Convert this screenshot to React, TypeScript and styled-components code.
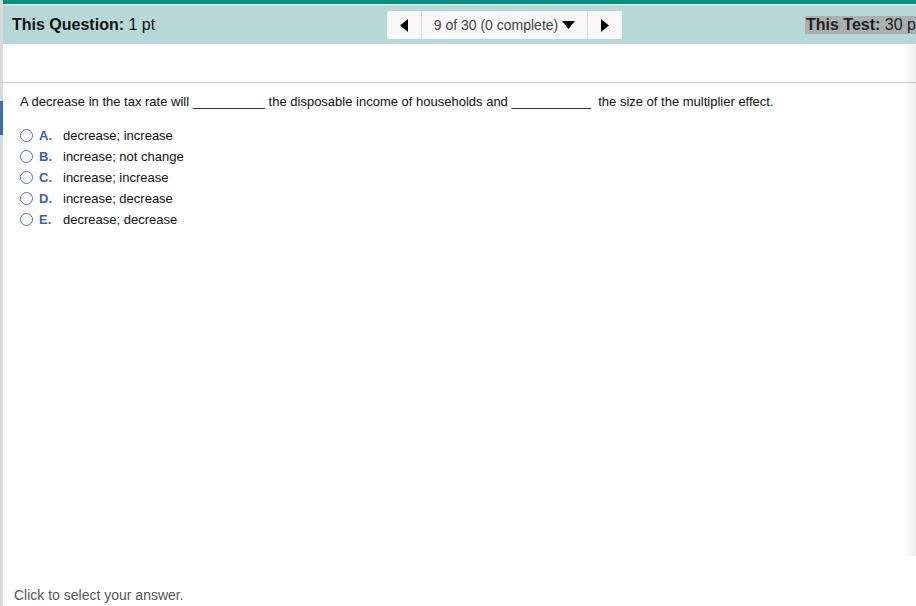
import React from "react";
import styled, { createGlobalStyle } from "styled-components";

const Global = createGlobalStyle`
  html, body { margin: 0; padding: 0; height: 100%; background: #fff; overflow: hidden; }
  body { font-family: Arial, "Liberation Sans", sans-serif; }
  #root { height: 100%; }
`;

const Page = styled.div`
  display: flex;
  width: 916px;
  height: 606px;
  overflow: hidden;
`;

const SideStrip = styled.div`
  position: relative;
  width: 3px;
  flex: none;
  background: #d9d9d9;
`;

const SideMarker = styled.div`
  position: absolute;
  left: 0;
  top: 101px;
  width: 3px;
  height: 34px;
  background: #3b6db4;
`;

const Main = styled.div`
  position: relative;
  flex: 1;
  display: flex;
  flex-direction: column;
  min-width: 0;
`;

const TopBar = styled.div`
  height: 4px;
  background: #00907f;
  border-bottom: 1px solid #fff;
`;

const Header = styled.div`
  height: 39px;
  background: #b6d9d7;
  display: flex;
  align-items: center;
  padding-left: 9px;
  position: relative;
  overflow: hidden;
`;

const Label = styled.span`
  font-size: 16px;
  color: #111;
  white-space: nowrap;
`;

const Bold = styled.b`
  font-weight: bold;
`;

const Nav = styled.div`
  position: absolute;
  left: 384px;
  top: 6px;
  display: flex;
  height: 28px;
  background: #f8f8f8;
  border-radius: 2px;
`;

const NavButton = styled.div`
  width: 34px;
  display: flex;
  align-items: center;
  justify-content: center;
`;

const NavMid = styled.div`
  width: 165px;
  display: flex;
  align-items: center;
  justify-content: center;
  gap: 4px;
  border-left: 1px solid #dcdcdc;
  border-right: 1px solid #dcdcdc;
  font-size: 14px;
  color: #444;
`;

const TestLabel = styled.span`
  position: absolute;
  left: 802px;
  top: 11px;
  background: #a9b0b0;
  font-size: 16px;
  color: #222;
  padding: 0 2px 0 1px;
  line-height: 18px;
  white-space: nowrap;
`;

const Spacer = styled.div`
  height: 38px;
  border-bottom: 1px solid #cfcfcf;
`;

const Content = styled.div`
  flex: 1;
  padding: 11px 0 0 17px;
  font-size: 13px;
  color: #111;
  display: flex;
  flex-direction: column;
`;

const Question = styled.div`
  line-height: 16px;
  white-space: nowrap;
`;

const Options = styled.div`
  margin-top: 17px;
  display: flex;
  flex-direction: column;
  gap: 5px;
`;

const Option = styled.div`
  display: flex;
  align-items: center;
  height: 16px;
  font-size: 13px;
`;

const Radio = styled.span`
  border: 1.3px solid #4a6fcc;
  border-radius: 50%;
  box-sizing: border-box;
  flex: none;
  width: 13px;
  height: 13px;
`;

const Letter = styled.span`
  color: #3a5fb8;
  font-weight: 600;
  margin-left: 6px;
  width: 24px;
`;

const Footer = styled.div`
  margin-top: auto;
  padding: 0 0 2px 11px;
  font-size: 14px;
  color: #555;
  line-height: 18px;
`;

const Shadow = styled.div`
  position: absolute;
  right: 0;
  top: 44px;
  bottom: 50px;
  width: 12px;
  background: linear-gradient(to right, rgba(0,0,0,0), rgba(0,0,0,0.07));
  pointer-events: none;
`;

const Tri = ({ dir }: { dir: "left" | "right" | "down" }) => {
  if (dir === "down")
    return (
      <svg width="13" height="10" viewBox="0 0 13 10">
        <polygon points="0,1 13,1 6.5,9" fill="#000" />
      </svg>
    );
  return (
    <svg width="10" height="13" viewBox="0 0 10 13">
      {dir === "left" ? (
        <polygon points="9,0 9,13 1,6.5" fill="#000" />
      ) : (
        <polygon points="1,0 1,13 9,6.5" fill="#000" />
      )}
    </svg>
  );
};

const options = [
  ["A.", "decrease; increase"],
  ["B.", "increase; not change"],
  ["C.", "increase; increase"],
  ["D.", "increase; decrease"],
  ["E.", "decrease; decrease"],
];

export default function App() {
  return (
    <>
      <Global />
      <Page>
        <SideStrip>
          <SideMarker />
        </SideStrip>
        <Main>
          <TopBar />
          <Header>
            <Label>
              <Bold>This Question:</Bold> 1 pt
            </Label>
            <Nav>
              <NavButton>
                <Tri dir="left" />
              </NavButton>
              <NavMid>
                9 of 30 (0 complete) <Tri dir="down" />
              </NavMid>
              <NavButton>
                <Tri dir="right" />
              </NavButton>
            </Nav>
            <TestLabel>
              <Bold>This Test:</Bold> 30 pts
            </TestLabel>
          </Header>
          <Spacer />
          <Content>
            <Question>
              A decrease in the tax rate will __________ the disposable income of households and ___________&nbsp; the size of the multiplier effect.
            </Question>
            <Options>
              {options.map(([l, t]) => (
                <Option key={l}>
                  <Radio />
                  <Letter>{l}</Letter>
                  <span>{t}</span>
                </Option>
              ))}
            </Options>
          </Content>
          <Footer>Click to select your answer.</Footer>
          <Shadow />
        </Main>
      </Page>
    </>
  );
}
